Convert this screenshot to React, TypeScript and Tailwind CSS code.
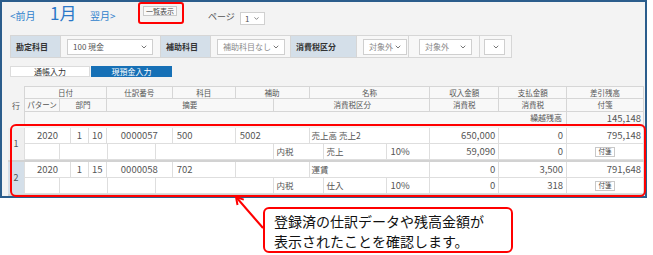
import { ChevronDown } from "lucide-react";

type Col = { w: string; text?: string; align?: string; cls?: string };

const head1: Col[] = [
  { w: "w-[82px]", text: "日付" },
  { w: "w-[66px]", text: "仕訳番号" },
  { w: "w-[63px]", text: "科目" },
  { w: "w-[74px]", text: "補助" },
  { w: "w-[121px]", text: "名称" },
  { w: "w-[69px]", text: "収入金額" },
  { w: "w-[68px]", text: "支払金額" },
  { w: "w-[77px]", text: "差引残高" },
];

const head2: Col[] = [
  { w: "w-[35px]", text: "パターン" },
  { w: "w-[47px]", text: "部門" },
  { w: "w-[167px]", text: "摘要" },
  { w: "w-[157px]", text: "消費税区分", align: "justify-start pl-[60px]" },
  { w: "w-[69px]", text: "消費税" },
  { w: "w-[68px]", text: "消費税" },
  { w: "w-[77px]", text: "付箋" },
];

const entries = [
  {
    no: "1",
    label: "bg-[#efefef]",
    y: "2020",
    m: "1",
    d: "10",
    num: "0000057",
    acct: "500",
    sub: "5002",
    name: "売上高 売上2",
    inc: "650,000",
    out: "0",
    bal: "795,148",
    kbn: "売上",
    taxIn: "59,090",
    taxOut: "0",
  },
  {
    no: "2",
    label: "bg-[#d4dfe9]",
    y: "2020",
    m: "1",
    d: "15",
    num: "0000058",
    acct: "702",
    sub: "",
    name: "運賃",
    inc: "0",
    out: "3,500",
    bal: "791,648",
    kbn: "仕入",
    taxIn: "0",
    taxOut: "318",
  },
];

function HeadRow({ cols, h }: { cols: Col[]; h: string }) {
  return (
    <div className={`flex ${h}`}>
      {cols.map((c, i) => (
        <div
          key={i}
          className={`${c.w} flex items-center ${c.align ?? "justify-center"} border-r border-b border-[#d6d6d6] text-[7.5px] text-[#555] leading-none`}
        >
          {c.text}
        </div>
      ))}
    </div>
  );
}

function Select({ w, text, muted }: { w: string; text: string; muted?: boolean }) {
  return (
    <div
      className={`${w} h-[16px] bg-white border border-[#cfcfcf] flex items-center justify-between pl-[5px] pr-[4px]`}
    >
      <span className={`text-[8px] leading-none ${muted ? "text-[#8a8a8a]" : "text-[#555]"}`}>{text}</span>
      <ChevronDown size={8} strokeWidth={3} className="text-[#777]" />
    </div>
  );
}

const cell = "h-full flex items-center border-r border-b border-[#dedede] bg-white text-[#555] leading-none";

export default function App() {
  return (
    <div className="w-[653px] h-[255px] bg-white relative overflow-hidden font-['Noto_Sans_CJK_JP',sans-serif]">
      {/* window */}
      <div className="w-[647px] h-[198px] border-2 border-[#2b5d8c] bg-[#f3f3f3] flex flex-col">
        {/* month nav */}
        <div className="h-[33px] flex items-start pl-[8px]">
          <span className="w-[40px] mt-[8px] text-[10px] leading-[12px] text-[#2f7fcc]">&lt;前月</span>
          <span className="w-[40px] mt-[1px] text-[17px] leading-[20px] text-[#2a78c8]">1月</span>
          <span className="w-[53px] mt-[8px] text-[10px] leading-[12px] text-[#2f7fcc]">翌月&gt;</span>
          <div className="w-[34px] h-[10px] mt-[4px] border border-[#c9c9c9] bg-[#f9f9f9] flex items-center justify-center text-[7px] leading-none text-[#444]">
            一覧表示
          </div>
          <span className="ml-[31px] w-[32px] mt-[9px] text-[9px] leading-[11px] text-[#555]">ページ</span>
          <div className="mt-[10px] w-[25px] h-[13px] bg-white border border-[#d0d0d0] flex items-center justify-between px-[4px]">
            <span className="text-[8px] leading-none text-[#555]">1</span>
            <ChevronDown size={7} strokeWidth={3} className="text-[#777]" />
          </div>
        </div>

        {/* filters */}
        <div className="ml-[8px] h-[23px] flex self-start border-y border-l border-[#d6d6d6] bg-[#f7f7f7]">
          <div className="w-[50px] bg-[#d4dfe9] border-r border-[#d6d6d6] flex items-center pl-[5px] text-[8px] font-bold text-[#333]">
            勘定科目
          </div>
          <div className="w-[100px] border-r border-[#d6d6d6] flex items-center pl-[6px]">
            <Select w="w-[86px]" text="100 現金" />
          </div>
          <div className="w-[50px] bg-[#d4dfe9] border-r border-[#d6d6d6] flex items-center pl-[5px] text-[8px] font-bold text-[#333]">
            補助科目
          </div>
          <div className="w-[80px] border-r border-[#d6d6d6] flex items-center pl-[6px]">
            <Select w="w-[68px]" text="補助科目なし" muted />
          </div>
          <div className="w-[66px] bg-[#d4dfe9] border-r border-[#d6d6d6] flex items-center pl-[5px] text-[8px] font-bold text-[#333]">
            消費税区分
          </div>
          <div className="w-[52px] border-r border-[#d6d6d6] flex items-center pl-[6px]">
            <Select w="w-[44px]" text="対象外" muted />
          </div>
          <div className="w-[71px] border-r border-[#d6d6d6] flex items-center pl-[10px]">
            <Select w="w-[53px]" text="対象外" muted />
          </div>
          <div className="w-[32px] border-r border-[#d6d6d6] flex items-center pl-[4px]">
            <Select w="w-[21px]" text="" />
          </div>
        </div>

        {/* tabs */}
        <div className="ml-[8px] mt-[8px] h-[11px] flex">
          <div className="w-[80px] bg-white border border-[#dcdcdc] flex items-center justify-center text-[8px] leading-none text-[#333]">
            通帳入力
          </div>
          <div className="w-[81px] ml-[1px] bg-[#1670b6] flex items-center justify-center text-[8px] leading-none text-white">
            現預金入力
          </div>
        </div>

        {/* table */}
        <div className="ml-[6px] mt-[9px] w-[636px] flex flex-col">
          <div className="flex">
            <div className="w-[16px] flex items-center justify-center text-[8px] text-[#555]">行</div>
            <div className="w-[620px] flex flex-col bg-[#f8f8f8] border-t border-l border-[#d6d6d6]">
              <HeadRow cols={head1} h="h-[12px]" />
              <HeadRow cols={head2} h="h-[13px]" />
              <div className="flex h-[13px]">
                <div className="w-[543px] flex items-center justify-end pr-[4px] border-r border-b border-[#d6d6d6] text-[8px] text-[#555]">
                  繰越残高
                </div>
                <div className="w-[77px] flex items-center justify-end pr-[2px] border-r border-b border-[#d6d6d6] text-[9.5px] text-[#555]">
                  145,148
                </div>
              </div>
            </div>
          </div>

          <div className="mt-[3px] flex flex-col">
            {entries.map((e) => (
              <div key={e.no} className="flex border-b-2 border-[#d2d2d2]">
                <div className={`w-[16px] ${e.label} flex items-center justify-center text-[9px] text-[#555]`}>
                  {e.no}
                </div>
                <div className="w-[620px] flex flex-col border-l border-[#dedede]">
                  <div className="flex h-[16px] text-[9.5px]">
                    <div className={`${cell} w-[46px] justify-center`}>{e.y}</div>
                    <div className={`${cell} w-[18px] justify-center`}>{e.m}</div>
                    <div className={`${cell} w-[18px] justify-center`}>{e.d}</div>
                    <div className={`${cell} w-[66px] justify-center`}>{e.num}</div>
                    <div className={`${cell} w-[63px] pl-[4px]`}>{e.acct}</div>
                    <div className={`${cell} w-[74px] pl-[4px]`}>{e.sub}</div>
                    <div className={`${cell} w-[121px] pl-[2px] text-[8.5px]`}>{e.name}</div>
                    <div className={`${cell} w-[69px] justify-end pr-[3px]`}>{e.inc}</div>
                    <div className={`${cell} w-[68px] justify-end pr-[3px]`}>{e.out}</div>
                    <div className={`${cell} w-[77px] justify-end pr-[2px]`}>{e.bal}</div>
                  </div>
                  <div className="flex h-[16px] text-[9.5px]">
                    <div className={`${cell} w-[35px]`} />
                    <div className={`${cell} w-[48px]`} />
                    <div className={`${cell} w-[48px]`} />
                    <div className={`${cell} w-[118px]`} />
                    <div className={`${cell} w-[50px] pl-[3px] text-[8.5px]`}>内税</div>
                    <div className={`${cell} w-[64px] pl-[3px] text-[8.5px]`}>{e.kbn}</div>
                    <div className={`${cell} w-[43px] pl-[3px]`}>10%</div>
                    <div className={`${cell} w-[69px] justify-end pr-[3px]`}>{e.taxIn}</div>
                    <div className={`${cell} w-[68px] justify-end pr-[3px]`}>{e.taxOut}</div>
                    <div className={`${cell} w-[77px] justify-center`}>
                      <div className="w-[20px] h-[10px] border border-[#c8c8c8] bg-white flex items-center justify-center text-[6.5px] leading-none text-[#444]">
                        付箋
                      </div>
                    </div>
                  </div>
                </div>
              </div>
            ))}
          </div>
        </div>
      </div>

      {/* highlight: list button */}
      <div className="absolute left-[138px] top-[2px] w-[46px] h-[22px] border-2 border-[#ff0000] rounded-[3px]" />
      {/* highlight: entries */}
      <div className="absolute left-[10px] top-[124px] w-[636px] h-[73px] border-2 border-[#ff0000] rounded-[6px]" />

      {/* arrow */}
      <svg className="absolute left-[230px] top-[190px]" width="40" height="45" viewBox="0 0 40 45">
        <line x1="33" y1="38" x2="6.5" y2="7.5" stroke="#ff0000" strokeWidth="2" />
        <polyline points="7.5,15 6,7 13.8,9.6" fill="none" stroke="#ff0000" strokeWidth="2" />
      </svg>

      {/* callout */}
      <div className="absolute left-[263px] top-[207px] w-[250px] h-[46px] border-2 border-[#ff0000] rounded-[6px] bg-white pl-[9px] pt-[2px] text-[14px] leading-[20px] text-[#111]">
        <div>登録済の仕訳データや残高金額が</div>
        <div>表示されたことを確認します。</div>
      </div>
    </div>
  );
}
